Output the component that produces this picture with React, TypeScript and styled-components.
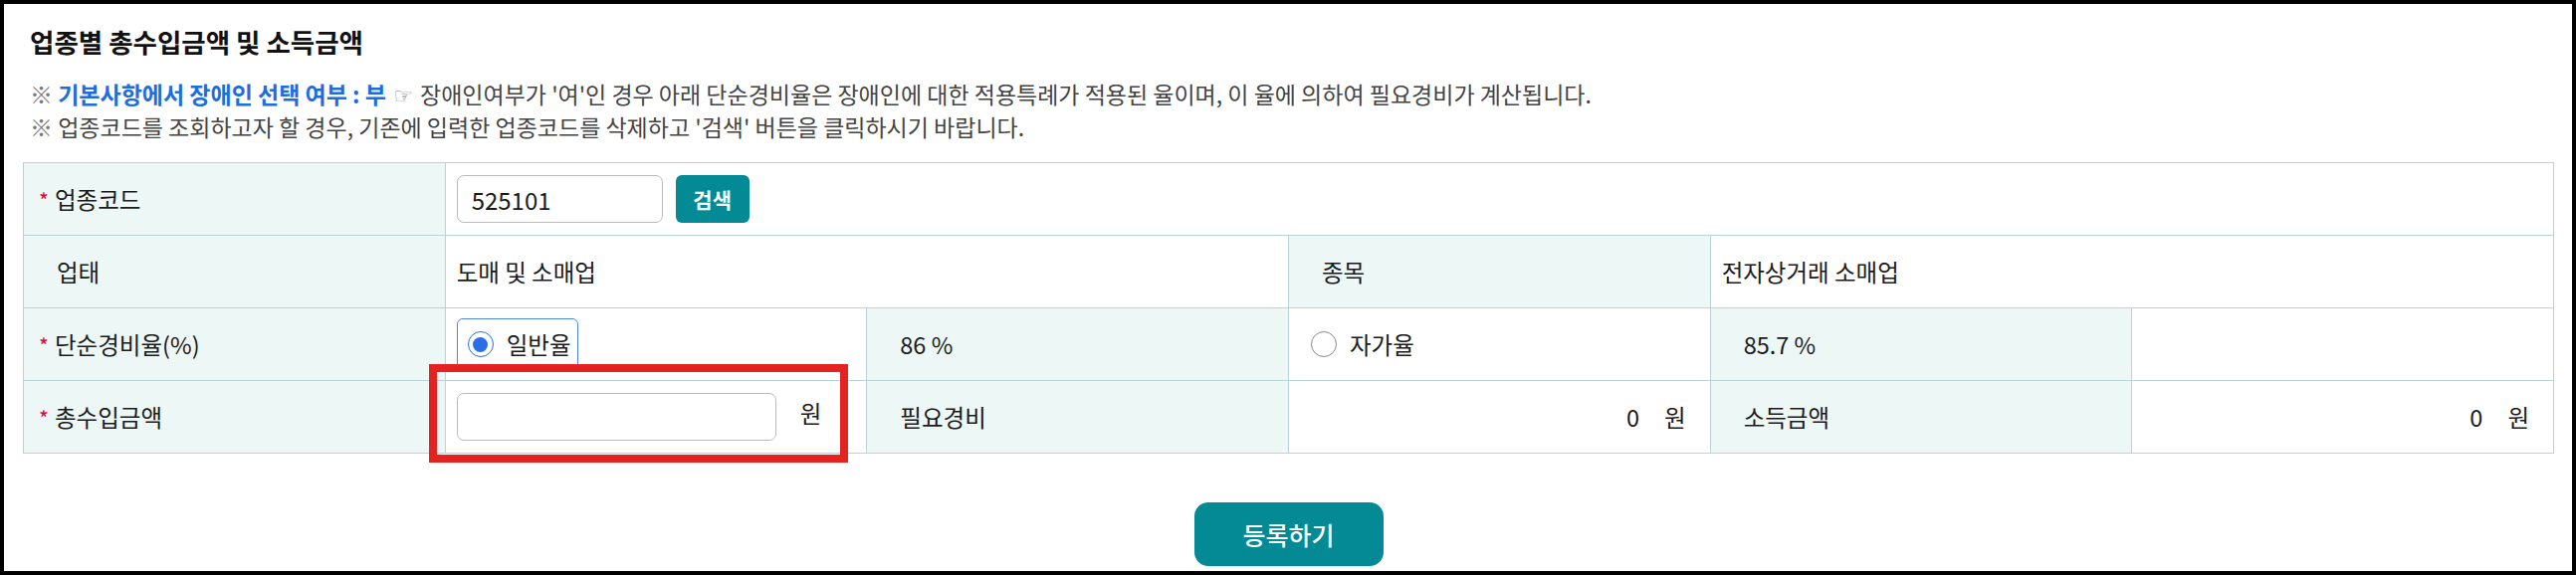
import React from 'react'
import styled, { createGlobalStyle } from 'styled-components'

const GlobalStyle = createGlobalStyle`
  html, body {
    margin: 0;
    padding: 0;
    background: #fff;
  }
  body {
    font-family: 'Noto Sans CJK KR', 'Noto Sans', sans-serif;
    color: #222;
  }
`

const Page = styled.div`
  position: relative;
  box-sizing: border-box;
  width: 2588px;
  height: 578px;
  border: 4px solid #000;
  padding: 21px 18px 0 19px;
  background: #fff;
`
const Title = styled.h2`
  margin: 0 0 0 7px;
  font-size: 26.5px;
  line-height: 34px;
  font-weight: 700;
  color: #111;
`
const Notes = styled.div`
  margin: 20px 0 21px 7px;
  font-size: 23px;
  line-height: 30px;
  color: #444;
`
const NoteLine = styled.p`
  margin: 0;
  white-space: nowrap;
`
const Mark = styled.span`
  color: #777;
`
const Highlight = styled.strong`
  color: #1a6ee0;
  font-weight: 700;
`
const Hand = styled.span`
  color: #888;
  font-family: 'DejaVu Sans', sans-serif;
  font-size: 22px;
  margin: 0 2px;
`

const Table = styled.table`
  width: 100%;
  border-collapse: collapse;
  table-layout: fixed;
  font-size: 23.5px;
  color: #1a1a1a;
`
const Row = styled.tr`
  height: 73px;
`
const Cell = styled.td<{ $tint?: boolean; $pad?: number; $right?: boolean }>`
  border: 1px solid #b8d4d7;
  background: ${p => (p.$tint ? '#edf7f6' : '#fff')};
  padding: 0 ${p => (p.$right ? 24 : 0)}px 0 ${p => p.$pad ?? 11}px;
  text-align: ${p => (p.$right ? 'right' : 'left')};
  vertical-align: middle;
  white-space: nowrap;
`
const LabelCell = styled(Cell)<{ $req?: boolean }>`
  background: #edf7f6;
  padding-left: ${p => (p.$req ? 15 : 33)}px;
`
const Star = styled.span`
  display: inline-block;
  width: 16px;
  color: #e6003c;
  font-size: 21px;
`

const TextInput = styled.input<{ $w: number }>`
  box-sizing: border-box;
  width: ${p => p.$w}px;
  height: 48px;
  border: 1px solid #bbb;
  border-radius: 7px;
  padding: 0 14px;
  font-family: inherit;
  font-size: 24px;
  color: #1a1a1a;
  background: #fff;
  vertical-align: middle;
  outline: none;
`
const SearchButton = styled.button`
  box-sizing: border-box;
  width: 74px;
  height: 48px;
  margin-left: 13px;
  border: 0;
  border-radius: 6px;
  background: #038a94;
  color: #fff;
  font-family: inherit;
  font-size: 21px;
  font-weight: 700;
  vertical-align: middle;
`

const RadioLabel = styled.label<{ $focus?: boolean }>`
  display: inline-flex;
  align-items: center;
  gap: 13px;
  box-sizing: border-box;
  height: 53px;
  padding: 0 6px 0 10px;
  border: 1px solid ${p => (p.$focus ? '#4a86e8' : 'transparent')};
  border-radius: 6px;
  vertical-align: middle;
`
const RadioDot = styled.span<{ $on?: boolean }>`
  display: flex;
  align-items: center;
  justify-content: center;
  box-sizing: border-box;
  width: 26px;
  height: 26px;
  border-radius: 50%;
  border: ${p => (p.$on ? '1.5px solid #2a6ee8' : '1.5px solid #8a8a8a')};
  background: #fff;
  &::after {
    content: '';
    width: 15px;
    height: 15px;
    border-radius: 50%;
    background: ${p => (p.$on ? '#2a6ee8' : 'transparent')};
  }
`

const Unit = styled.span<{ $gap: number }>`
  margin-left: ${p => p.$gap}px;
`

const Footer = styled.div`
  display: flex;
  justify-content: center;
  margin-top: 49px;
`
const RegisterButton = styled.button`
  width: 190px;
  height: 64px;
  border: 0;
  border-radius: 14px;
  background: #038a94;
  color: #fff;
  font-family: inherit;
  font-size: 25px;
  font-weight: 500;
`

// 캡처에 덧그려진 빨간 강조 박스
const Highlighter = styled.div`
  position: absolute;
  left: 427px;
  top: 362px;
  width: 421px;
  height: 99px;
  box-sizing: border-box;
  border: 8px solid #e52222;
  pointer-events: none;
`

const App = () => {
  return (
    <Page>
      <GlobalStyle />
      <Title>업종별 총수입금액 및 소득금액</Title>
      <Notes>
        <NoteLine>
          <Mark>※</Mark> <Highlight>기본사항에서 장애인 선택 여부 : 부</Highlight>{' '}
          <Hand>☞</Hand> 장애인여부가 '여'인 경우 아래 단순경비율은 장애인에 대한
          적용특례가 적용된 율이며, 이 율에 의하여 필요경비가 계산됩니다.
        </NoteLine>
        <NoteLine>
          <Mark>※</Mark> 업종코드를 조회하고자 할 경우, 기존에 입력한 업종코드를
          삭제하고 '검색' 버튼을 클릭하시기 바랍니다.
        </NoteLine>
      </Notes>
      <Table>
        <colgroup>
          <col />
          <col />
          <col />
          <col />
          <col />
          <col />
        </colgroup>
        <tbody>
          <Row>
            <LabelCell $req>
              <Star>*</Star>업종코드
            </LabelCell>
            <Cell colSpan={5}>
              <TextInput $w={207} defaultValue='525101' />
              <SearchButton>검색</SearchButton>
            </Cell>
          </Row>
          <Row>
            <LabelCell>업태</LabelCell>
            <Cell colSpan={2}>도매 및 소매업</Cell>
            <Cell $tint $pad={33}>
              종목
            </Cell>
            <Cell colSpan={2}>전자상거래 소매업</Cell>
          </Row>
          <Row>
            <LabelCell $req>
              <Star>*</Star>단순경비율(%)
            </LabelCell>
            <Cell>
              <RadioLabel $focus>
                <RadioDot $on />
                일반율
              </RadioLabel>
            </Cell>
            <Cell $tint $pad={33}>
              86 %
            </Cell>
            <Cell>
              <RadioLabel>
                <RadioDot />
                자가율
              </RadioLabel>
            </Cell>
            <Cell $tint $pad={33}>
              85.7 %
            </Cell>
            <Cell />
          </Row>
          <Row>
            <LabelCell $req>
              <Star>*</Star>총수입금액
            </LabelCell>
            <Cell>
              <TextInput $w={321} />
              <Unit $gap={24}>원</Unit>
            </Cell>
            <Cell $tint $pad={33}>
              필요경비
            </Cell>
            <Cell $right>
              0<Unit $gap={25}>원</Unit>
            </Cell>
            <Cell $tint $pad={33}>
              소득금액
            </Cell>
            <Cell $right>
              0<Unit $gap={25}>원</Unit>
            </Cell>
          </Row>
        </tbody>
      </Table>
      <Footer>
        <RegisterButton>등록하기</RegisterButton>
      </Footer>
      <Highlighter />
    </Page>
  )
}

export default App
